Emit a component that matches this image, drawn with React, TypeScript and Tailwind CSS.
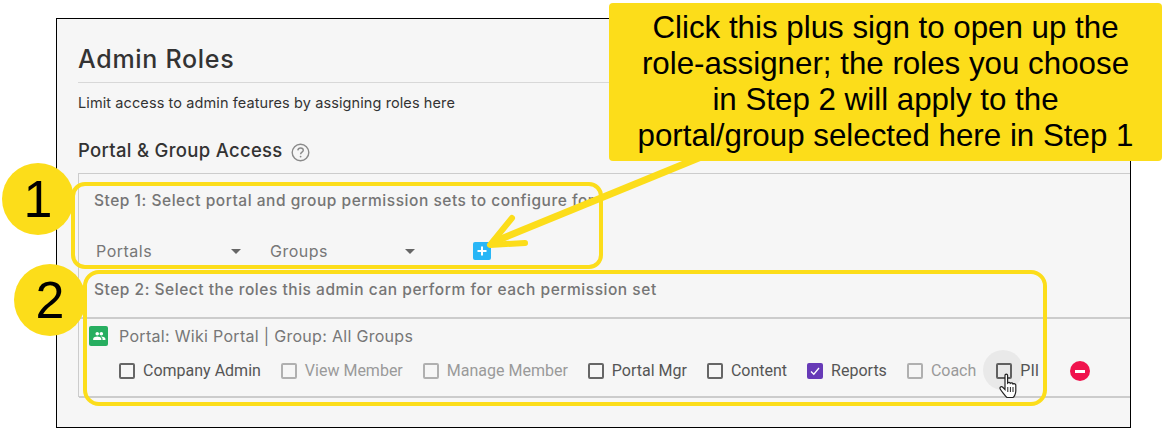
import React from "react";

function Check({ label, muted, checked }: { label: string; muted?: boolean; checked?: boolean }) {
  return (
    <div className="flex items-center gap-2 font-['Roboto',sans-serif] text-[16px] leading-5">
      {checked ? (
        <span className="flex h-4 w-4 items-center justify-center rounded-[2px] bg-[#673ab7]">
          <svg width="12" height="12" viewBox="0 0 12 12" fill="none" stroke="#fff" strokeWidth="1.3"><path d="M2 6.5 L4.8 9.2 L10 3" /></svg>
        </span>
      ) : (
        <span className={`h-4 w-4 rounded-[2px] border-2 ${muted ? "border-[#b0b0b0]" : "border-[#666666]"}`} />
      )}
      <span className={muted ? "text-[#9a9a9a]" : "text-[#555555]"}>{label}</span>
    </div>
  );
}

function Select({ label }: { label: string }) {
  return (
    <div className="flex w-[174px] items-center justify-between pl-[2px] pr-[27px] text-[16px] tracking-[0.5px] text-[#777777]">
      <span>{label}</span>
      <span className="h-0 w-0 border-x-[5px] border-t-[5px] border-x-transparent border-t-[#666666]" />
    </div>
  );
}

export default function App() {
  return (
    <div className="relative h-[428px] w-[1164px] overflow-hidden bg-white font-['Inter',sans-serif]">
      <div className="pt-[18px] pl-[56px]">
        <div className="h-[410px] w-[1075px] border border-black bg-[#f6f6f6] pl-[21px] pt-[25px]">
          <h1 className="border-b border-[#d8d8d8] pb-[8px] text-[25px] font-medium leading-[30px] tracking-[0.7px] text-[#333333]">Admin Roles</h1>
          <p className="mt-[11px] text-[14.5px] leading-[18px] tracking-[0.1px] text-[#333333]">Limit access to admin features by assigning roles here</p>
          <div className="mt-[26px] flex items-center gap-[8px]">
            <h2 className="text-[18.5px] font-medium leading-[24px] tracking-[0.3px] text-[#333333]">Portal &amp; Group Access</h2>
            <svg width="19" height="19" viewBox="0 0 19 19" fill="none" className="mt-[4px]">
              <circle cx="9.5" cy="9.5" r="8.3" stroke="#8a8a8a" strokeWidth="1.4" />
              <path d="M6.8 7.4 C7 5.8 8.2 5 9.6 5 C11.2 5 12.3 6 12.3 7.3 C12.3 9.2 9.6 9.2 9.6 11.3" stroke="#8a8a8a" strokeWidth="1.4" />
              <circle cx="9.6" cy="13.6" r="0.9" fill="#8a8a8a" />
            </svg>
          </div>
          <div className="mt-[11px] h-[224px] border-y border-l border-[#cccccc]">
            <div className="pl-[15px] pt-[17px] text-[15.5px] font-medium leading-5 tracking-[0.53px] text-[#757575]">Step 1: Select portal and group permission sets to configure for</div>
            <div className="mt-[30px] flex h-5 items-center pl-[15px]">
              <Select label="Portals" />
              <Select label="Groups" />
              <span className="ml-[31px] flex h-[18px] w-[18px] items-center justify-center rounded-[2px] bg-[#29b6f6]">
                <svg width="12" height="12" viewBox="0 0 12 12" stroke="#fff" strokeWidth="2"><path d="M6 1.5 V10.5 M1.5 6 H10.5" /></svg>
              </span>
            </div>
            <div className="mt-[19px] h-[39px] border-b-2 border-[#cccccc] pl-[15px] text-[15.5px] font-medium leading-5 tracking-[0.53px] text-[#757575]">Step 2: Select the roles this admin can perform for each permission set</div>
            <div className="flex items-center gap-[11px] pl-[10px] pt-[7px]">
              <span className="flex h-[20px] w-[19px] items-center justify-center rounded-[2px] bg-[#27ae60]">
                <svg width="14" height="14" viewBox="0 0 24 24" fill="#fff"><path d="M16 11c1.7 0 3-1.3 3-3s-1.3-3-3-3-3 1.3-3 3 1.3 3 3 3zm-7 0c1.7 0 3-1.3 3-3S10.7 5 9 5 6 6.300 6 8s1.300 3 3 3zm0 2c-2.300 0-7 1.200-7 3.500V19h14v-2.500C16 14.200 11.300 13 9 13zm7 0h-1c1.200.9 3 2 3 3.500V19h5v-2.500c0-2.300-4.700-3.500-7-3.500z" /></svg>
              </span>
              <span className="text-[16px] leading-5 tracking-[0.3px] text-[#777777]">Portal: Wiki Portal | Group: All Groups</span>
            </div>
            <div className="mt-[15px] flex items-center gap-5 pl-[40px]">
              <Check label="Company Admin" />
              <Check label="View Member" muted />
              <Check label="Manage Member" muted />
              <Check label="Portal Mgr" />
              <Check label="Content" />
              <Check label="Reports" checked />
              <Check label="Coach" muted />
              <Check label="PII" />
              <span className="ml-[11px] flex h-5 w-5 items-center justify-center rounded-full bg-[#f0134d]">
                <span className="h-[3px] w-[10px] bg-white" />
              </span>
            </div>
            <div className="mt-[15px] h-0.5 bg-[#cccccc]" />
          </div>
        </div>
      </div>

      {/* Annotations */}
      <div className="absolute left-[983px] top-[350px] h-10 w-10 rounded-full bg-black/5" />
      <div className="absolute left-[71px] top-[182px] h-[87px] w-[532px] rounded-[14px] border-[4px] border-[#fcdd1a]" />
      <div className="absolute left-[83px] top-[270px] h-[136px] w-[964px] rounded-[16px] border-[4px] border-[#fcdd1a]" />
      <div className="absolute left-[2px] top-[163px] flex h-[72px] w-[72px] items-center justify-center rounded-full bg-[#fcdd1a] font-['Liberation_Sans',sans-serif] text-[52px] text-black">1</div>
      <div className="absolute left-[14px] top-[264px] flex h-[72px] w-[72px] items-center justify-center rounded-full bg-[#fcdd1a] font-['Liberation_Sans',sans-serif] text-[52px] text-black">2</div>
      <svg className="absolute left-[470px] top-[140px]" width="260" height="120" viewBox="470 140 260 120" fill="none" stroke="#fcdd1a" strokeLinecap="round" strokeLinejoin="round">
        <path d="M706 155 L496 241" strokeWidth="7" strokeLinecap="butt" />
        <path d="M512 218 L490 245 L525 243" strokeWidth="6" />
      </svg>
      <div className="absolute left-[609px] top-[3px] flex h-[158px] w-[553px] items-center justify-center rounded-[4px] bg-[#fcdd1a] pb-[1px] text-center font-['Liberation_Sans',sans-serif] text-[31.3px] leading-[36px] text-black">
        <div>
          Click this plus sign to open up the<br />role-assigner; the roles you choose<br />in Step 2 will apply to the<br />portal/group selected here in Step 1
        </div>
      </div>
      <svg className="absolute left-[999px] top-[373px]" width="20" height="26" viewBox="0 0 20 26">
        <path d="M6 2.200 C6 .8 8.600 .8 8.600 2.200 V10 C9.500 9 11 9.200 11.300 10.300 C12.200 9.500 13.700 9.800 14 11 C15 10.300 16.800 10.800 16.800 12.300 V18 C16.800 21 15 24 14 24.500 H8 C6.500 23.500 2 17.500 1.200 16 C.4 14.500 2 13 3.500 14 L6 16.500 Z" fill="#fff" stroke="#222" strokeWidth="1.200" />
        <path d="M8.800 14 V19 M11.400 14 V19 M14 14 V19" stroke="#222" strokeWidth="1" />
      </svg>
    </div>
  );
}
